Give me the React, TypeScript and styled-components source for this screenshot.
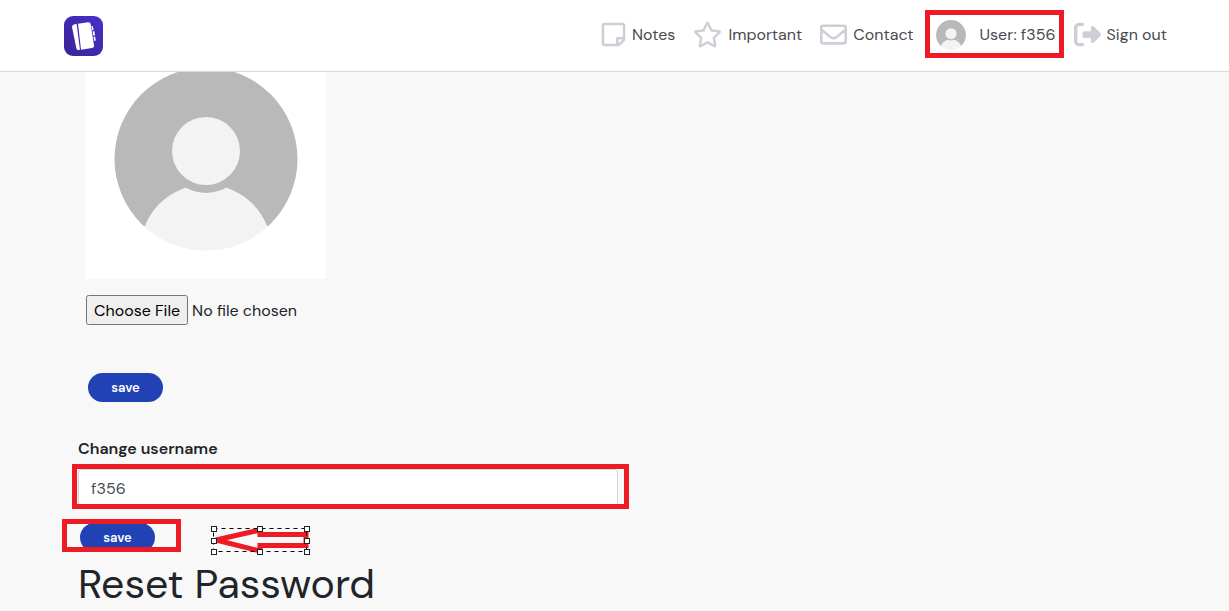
import React from "react";
import styled, { createGlobalStyle } from "styled-components";
import { FaRegStickyNote, FaRegStar, FaRegEnvelope } from "react-icons/fa";
import { FaRightFromBracket } from "react-icons/fa6";

const GlobalStyle = createGlobalStyle`
  *, *::before, *::after { box-sizing: border-box; }
  body {
    margin: 0;
    background: #f8f8f8;
    color: #212529;
    font-family: "DM Sans", Inter, "Liberation Sans", sans-serif;
    font-size: 16px;
    line-height: 24px;
  }
`;

const Header = styled.header`
  display: flex;
  align-items: center;
  justify-content: space-between;
  height: 72px;
  padding: 0 62px 0 64px;
  background: #fff;
  border-bottom: 1px solid #d9d9d9;
`;

const HomeLink = styled.a`
  display: flex;
`;

const Nav = styled.nav`
  display: flex;
  align-items: center;
  gap: 18px;
  padding-bottom: 2px;
`;

const NavLink = styled.a<{ $gap?: number }>`
  position: relative;
  display: flex;
  align-items: center;
  gap: ${({ $gap = 6 }) => $gap}px;
  color: #4a4a4f;
  text-decoration: none;
  white-space: nowrap;

  > svg {
    flex: none;
    color: #cfced6;
  }
`;

const UserLink = styled(NavLink)`
  margin-left: 4px;
`;

const Main = styled.main`
  padding: 0 78px;
`;

const Form = styled.form`
  display: flex;
  flex-direction: column;
  align-items: flex-start;
`;

const PictureForm = styled(Form)`
  padding-left: 8px;
`;

const Picture = styled.svg`
  display: block;
  background: #fff;
`;

const FileInput = styled.input`
  width: 260px;
  margin: 16px 0 48px;
  font: inherit;
  color: inherit;

  &::file-selector-button {
    height: 30px;
    font: inherit;
  }
`;

const SaveButton = styled.button`
  width: 75px;
  height: 29px;
  margin: 0 2px;
  padding: 0;
  border: 0;
  border-radius: 15px;
  background: #2042b4;
  color: #fff;
  font: 600 13px/20px "DM Sans", Inter, "Liberation Sans", sans-serif;
`;

const Label = styled.label`
  margin: 35px 0 8px;
  font-weight: 600;
`;

const Field = styled.div`
  position: relative;
  width: 100%;
  max-width: 540px;
  margin-bottom: 16px;
`;

const TextInput = styled.input`
  display: block;
  width: 100%;
  height: 38px;
  padding: 6px 12px;
  border: 1px solid #ced4da;
  border-radius: 4px;
  background: #fff;
  color: #495057;
  font: inherit;
`;

const Actions = styled.div`
  position: relative;
  display: flex;
`;

const Heading = styled.h1`
  margin: 8px 0 0;
  font-size: 41px;
  line-height: 48px;
  font-weight: 400;
`;

const Highlight = styled.span<{ $inset: string }>`
  position: absolute;
  inset: ${({ $inset }) => $inset};
  border: 5px solid #ed1c24;
  pointer-events: none;
`;

const Arrow = styled.svg`
  position: absolute;
  left: 132px;
  top: 2px;
`;

function Logo() {
  return (
    <svg width="39" height="40" viewBox="0 0 39 40" role="img" aria-label="Home">
      <defs>
        <linearGradient id="logo" x1="0" y1="1" x2="1" y2="0">
          <stop offset="0" stopColor="#3b2297" />
          <stop offset="1" stopColor="#4730c9" />
        </linearGradient>
      </defs>
      <rect width="39" height="40" rx="9" fill="url(#logo)" />
      <path d="M10 8.500l2.600-.7 3.400 26-1.600.1q-1.700 0-2-1.500L8 11q-.2-2 2-2.500z" fill="#fff" />
      <path d="M14 7.700L24 6.200q2.300-.3 2.700 1.800l3.300 21.500q.3 2.200-2 2.600l-11 1.700z" fill="#fff" />
      <path d="M27.500 10l1.300-.1.800 4.200-1.300.4zM28.600 15.500l1.700-.5.800 4.200-1.700.5zM29.500 21l1.600-.5.700 4-1.600.5z" fill="#fff" />
    </svg>
  );
}

function PersonShapes({ id }: { id: string }) {
  return (
    <>
      <clipPath id={id}>
        <circle cx="120" cy="87" r="91.500" />
      </clipPath>
      <g clipPath={`url(#${id})`}>
        <rect x="20" y="-10" width="200" height="164" fill="#b9b9b9" />
        <rect x="20" y="154" width="200" height="30" fill="#f3f3f3" />
        <circle cx="120" cy="178" r="65.600" fill="#f3f3f3" />
        <circle cx="120" cy="79" r="42" fill="#b9b9b9" />
        <circle cx="120" cy="79" r="34" fill="#f3f3f3" />
      </g>
    </>
  );
}

function SelectedArrow() {
  const handles = [
    [3, 3], [49, 3], [96, 3],
    [3, 15], [96, 15],
    [3, 26], [49, 26], [96, 26],
  ];
  return (
    <Arrow width="100" height="30" viewBox="0 0 100 30" aria-hidden="true">
      <path d="M6 15L50 5V9.500H96V20.500H50V26L6 15z" fill="none" stroke="#ed1c24" strokeWidth="5" />
      <rect x="3.500" y="3.500" width="93" height="23" fill="none" stroke="#000" strokeDasharray="4 4" />
      {handles.map(([x, y]) => (
        <rect key={`${x}-${y}`} x={x - 1.5} y={y - 1.5} width="5" height="5" fill="#fff" stroke="#222" />
      ))}
    </Arrow>
  );
}

export default function App() {
  return (
    <>
      <GlobalStyle />
      <Header>
        <HomeLink href="#"><Logo /></HomeLink>
        <Nav>
          <NavLink href="#" $gap={5}><FaRegStickyNote size={27} />Notes</NavLink>
          <NavLink href="#"><FaRegStar size={29} />Important</NavLink>
          <NavLink href="#"><FaRegEnvelope size={27} />Contact</NavLink>
          <UserLink href="#" $gap={14}>
            <svg width="30" height="30" viewBox="28 -5 184 184" aria-hidden="true">
              <PersonShapes id="avatar-small" />
            </svg>
            User: f356
            <Highlight $inset="-10px -8px -8px -11px" />
          </UserLink>
          <NavLink href="#"><FaRightFromBracket size={27} />Sign out</NavLink>
        </Nav>
      </Header>
      <Main>
        <PictureForm>
          <Picture width="240" height="207" viewBox="0 0 240 207" role="img" aria-label="Profile picture">
            <PersonShapes id="avatar-large" />
          </Picture>
          <FileInput type="file" aria-label="Profile picture file" />
          <SaveButton type="button">save</SaveButton>
        </PictureForm>
        <Form>
          <Label htmlFor="username">Change username</Label>
          <Field>
            <TextInput id="username" defaultValue="f356" />
            <Highlight $inset="-5px -11px -2px -6px" />
          </Field>
          <Actions>
            <SaveButton type="button">save</SaveButton>
            <Highlight $inset="-4px -24px 0 -16px" />
            <SelectedArrow />
          </Actions>
        </Form>
        <Heading>Reset Password</Heading>
      </Main>
    </>
  );
}
